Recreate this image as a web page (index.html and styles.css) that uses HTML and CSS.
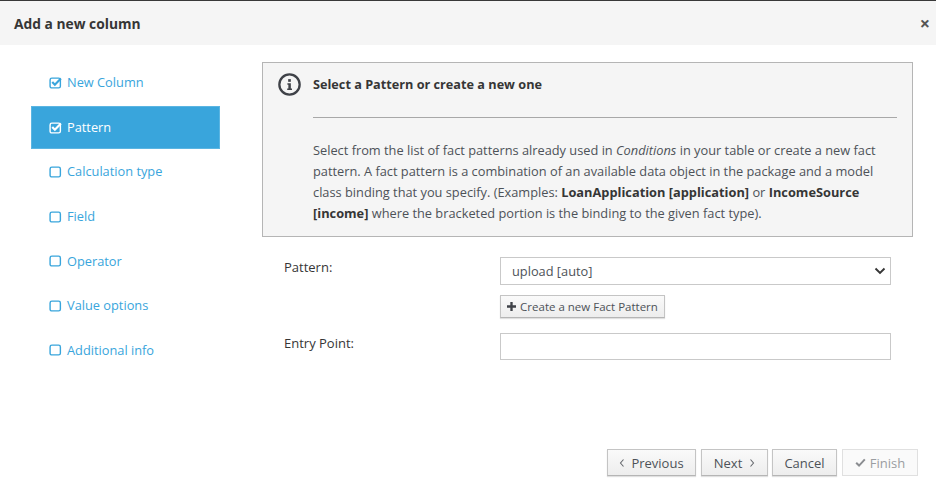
FILE: index.html
```html
<!DOCTYPE html>
<html lang="en">
<head>
<meta charset="utf-8">
<title>Add a new column</title>
<link rel="stylesheet" href="styles.css">
</head>
<body>
<div class="modal">
  <header class="modal-header">
    <h1 class="modal-title">Add a new column</h1>
    <span class="close">×</span>
  </header>
  <div class="modal-body">
    <nav class="steps">
      <a class="step"><svg class="check" viewBox="0 0 12 12"><rect x="1" y="2" width="9.5" height="9" rx="1.6" class="box"/><path d="M3 5.6l2.4 2.5L11 2.4" class="tick"/></svg><span>New Column</span></a>
      <a class="step active"><svg class="check" viewBox="0 0 12 12"><rect x="1" y="2" width="9.5" height="9" rx="1.6" class="box"/><path d="M3 5.6l2.4 2.5L11 2.4" class="tick"/></svg><span>Pattern</span></a>
      <a class="step"><svg class="check" viewBox="0 0 12 12"><rect x="1" y="2" width="9.5" height="9" rx="1.6" class="box"/></svg><span>Calculation type</span></a>
      <a class="step"><svg class="check" viewBox="0 0 12 12"><rect x="1" y="2" width="9.5" height="9" rx="1.6" class="box"/></svg><span>Field</span></a>
      <a class="step"><svg class="check" viewBox="0 0 12 12"><rect x="1" y="2" width="9.5" height="9" rx="1.6" class="box"/></svg><span>Operator</span></a>
      <a class="step"><svg class="check" viewBox="0 0 12 12"><rect x="1" y="2" width="9.5" height="9" rx="1.6" class="box"/></svg><span>Value options</span></a>
      <a class="step"><svg class="check" viewBox="0 0 12 12"><rect x="1" y="2" width="9.5" height="9" rx="1.6" class="box"/></svg><span>Additional info</span></a>
    </nav>
    <main class="content">
      <section class="info">
        <svg class="info-icon" viewBox="0 0 24 24"><circle cx="12" cy="12" r="10.6" class="ring"/><rect x="10.6" y="6.4" width="2.8" height="2.8" class="dot"/><path d="M9.8 10.6h3.6v5.6h1.2v1.6H9.6v-1.6h1.2v-4H9.8z" class="dot"/></svg>
        <div class="info-main">
          <h2 class="info-title">Select a Pattern or create a new one</h2>
          <hr class="rule">
          <p class="info-text">Select from the list of fact patterns already used in <em>Conditions</em> in your table or create a new fact pattern. A fact pattern is a combination of an available data object in the package and a model class binding that you specify. (Examples: <b>LoanApplication [application]</b> or <b>IncomeSource [income]</b> where the bracketed portion is the binding to the given fact type).</p>
        </div>
      </section>
      <form class="form">
        <label class="label label-pattern">Pattern:</label>
        <div class="field">
          <div class="select"><span>upload [auto]</span><svg class="caret" viewBox="0 0 12 8"><path d="M1.5 1.5L6 6l4.5-4.5"/></svg></div>
          <button type="button" class="btn btn-small"><svg class="plus" viewBox="0 0 10 10"><path d="M3.7 0h2.6v3.7H10v2.6H6.3V10H3.7V6.3H0V3.7h3.7z"/></svg>Create a new Fact Pattern</button>
        </div>
        <label class="label label-entry">Entry Point:</label>
        <div class="input"></div>
      </form>
      <footer class="actions">
        <button type="button" class="btn btn-prev"><svg class="chev" viewBox="0 0 6 10"><path d="M4.5 1.5L1.5 5l3 3.5"/></svg>Previous</button>
        <button type="button" class="btn btn-next">Next<svg class="chev chev-next" viewBox="0 0 6 10"><path d="M1.5 1.5l3 3.5-3 3.5"/></svg></button>
        <button type="button" class="btn btn-cancel">Cancel</button>
        <button type="button" class="btn btn-disabled"><svg class="tick-icon" viewBox="0 0 12 10"><path d="M1.2 5.2l3.2 3.2 6.4-6.8"/></svg>Finish</button>
      </footer>
    </main>
  </div>
</div>
</body>
</html>
```
FILE: styles.css
```css
* { box-sizing: border-box; }
html, body { margin: 0; padding: 0; }
body {
  width: 936px;
  height: 488px;
  overflow: hidden;
  background: #fff;
  color: #363636;
  font-family: "Open Sans", sans-serif;
  font-size: 13px;
}
.modal { height: 488px; display: flex; flex-direction: column; border-top: 1px solid #393939; }
.modal-header {
  height: 44px;
  flex: none;
  background: #f5f5f5;
  display: flex;
  align-items: center;
  justify-content: space-between;
  padding: 0 6px 0 14px;
}
.modal-title { margin: 0; font-size: 13.8px; font-weight: 700; color: #363636; }
.close { font-size: 18px; font-weight: 700; color: #555; line-height: 1; }
.modal-body { flex: 1; display: flex; min-height: 0; }
.steps { width: 262px; flex: none; padding: 15px 42px 0 31px; display: flex; flex-direction: column; }
.step {
  height: 44.6px;
  display: flex;
  align-items: center;
  gap: 5px;
  padding-left: 18px;
  color: #39a5dc;
  font-size: 12.8px;
}
.step.active { background: #39a5dc; color: #fff; border: 1px solid #5bb5e2; padding-left: 17px; height: 43px; margin: 1px 0 0.6px; }
.check { width: 13px; height: 13px; flex: none; }
.box { fill: none; stroke: currentColor; stroke-width: 1.3; }
.tick { fill: none; stroke: currentColor; stroke-width: 2; }
.content { flex: 1; padding: 17px 23px 0 0; display: flex; flex-direction: column; min-width: 0; }
.info {
  height: 175px;
  flex: none;
  display: flex;
  gap: 12px;
  padding: 10px 15px 0 15px;
  background: #f5f5f5;
  border: 1px solid #b5b5b5;
}
.info-icon { width: 23px; height: 23px; flex: none; }
.ring { fill: none; stroke: #3f4248; stroke-width: 2.4; }
.dot { fill: #3f4248; }
.info-main { flex: 1; min-width: 0; }
.info-title { margin: 0; font-size: 12.7px; font-weight: 700; line-height: 22px; color: #363636; }
.rule { margin: 22px 0 0; border: 0; border-top: 1px solid #a8a8a8; }
.info-text { margin: 22px 0 0; font-size: 12.8px; line-height: 21px; color: #4d5258; }
.info-text b { color: #363636; font-weight: 700; }
.form {
  display: grid;
  grid-template-columns: 216px 391px;
  padding: 20px 0 0 22px;
  row-gap: 15px;
}
.label { font-size: 13px; color: #363636; line-height: 18px; }
.label-pattern { padding-top: 1px; }
.label-entry { padding-top: 1px; }
.field { display: flex; flex-direction: column; align-items: flex-start; gap: 10px; }
.select, .input {
  width: 391px;
  border: 1px solid #c9c9c9;
  background: #fff;
}
.select {
  height: 28px;
  display: flex;
  align-items: center;
  justify-content: space-between;
  padding: 0 4px 0 11px;
  color: #4d5258;
  font-size: 12.8px;
}
.input { height: 27px; }
.caret { width: 12px; height: 8px; fill: none; stroke: #363636; stroke-width: 1.9; }
.btn {
  height: 27px;
  font-family: "Open Sans", sans-serif;
  font-size: 13px;
  color: #4d5258;
  background: linear-gradient(#fafafa, #ededed);
  border: 1px solid #c4c4c4;
  border-bottom-color: #b5b5b5;
  box-shadow: 0 1px 1px rgba(0,0,0,.12);
  padding: 0;
  display: inline-flex;
  align-items: center;
  justify-content: center;
}
.btn-small { height: 23px; width: 165px; font-size: 11.5px; }
.btn-prev { width: 89px; }
.btn-next { width: 67px; margin-left: 1px; }
.btn-cancel { width: 65px; }
.plus { width: 9px; height: 9px; margin-right: 4px; fill: #3f4248; }
.actions { margin-top: auto; padding: 0 0 12px 0; display: flex; justify-content: flex-end; gap: 4px; margin-right: -5px; }
.chev { width: 6px; height: 10px; fill: none; stroke: #66696e; stroke-width: 1.1; margin-right: 6px; }
.chev-next { margin: 0 0 0 7px; }
.btn-disabled { width: 76px; background: #fafafa; color: #9a9da1; border-color: #e0e0e0; box-shadow: none; margin-left: 1px; }
.tick-icon { width: 11px; height: 9px; fill: none; stroke: #8b8d91; stroke-width: 2.2; margin-right: 4px; }
```
